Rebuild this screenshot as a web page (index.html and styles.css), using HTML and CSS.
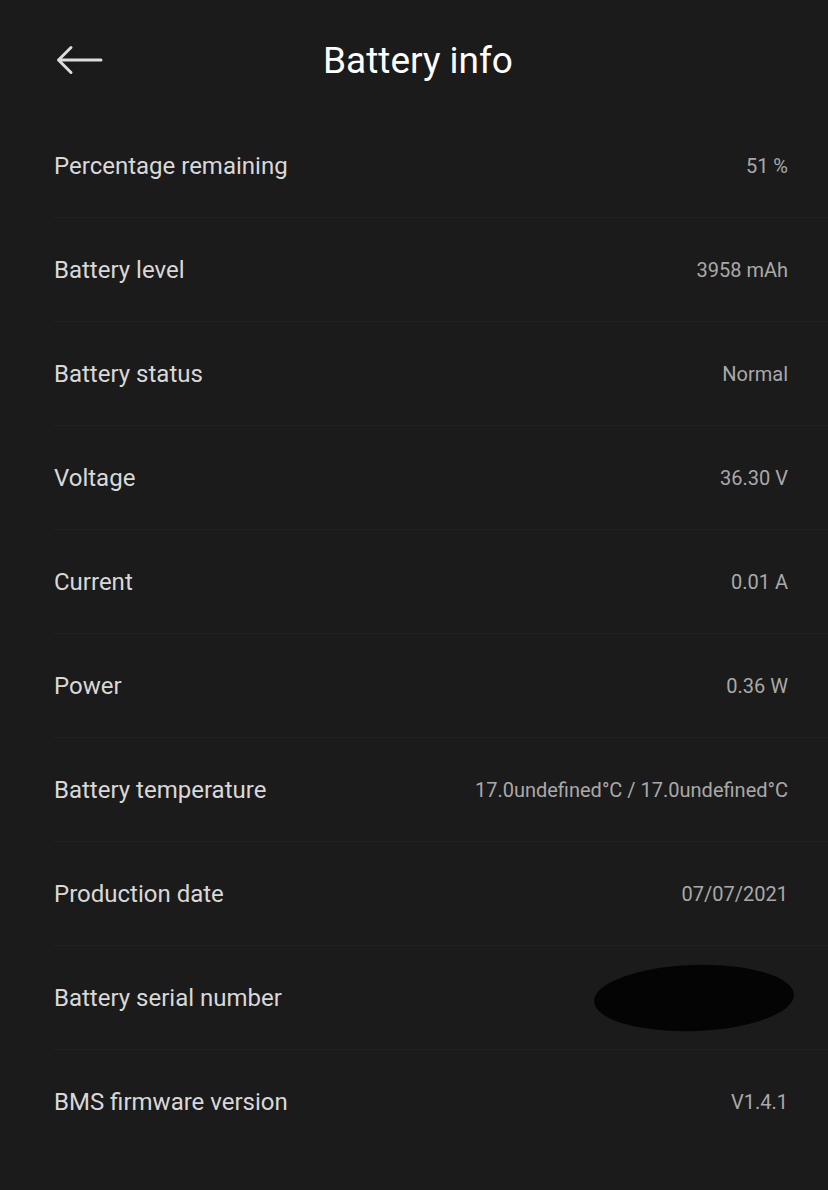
FILE: index.html
```html
<!DOCTYPE html>
<html>
<head>
<meta charset="utf-8">
<link rel="stylesheet" href="styles.css">
</head>
<body>
<div class="page">
  <header class="topbar">
    <button class="back" aria-label="Back">
      <svg width="48" height="32" viewBox="0 0 48 32"><path d="M2.5 16 H45 M15 3.5 L2.5 16 L15 28.5" fill="none" stroke="#dcdcdc" stroke-width="3" stroke-linecap="round" stroke-linejoin="round"/></svg>
    </button>
    <h1 class="title">Battery info</h1>
  </header>
  <ul class="list">
    <li class="row"><span class="label">Percentage remaining</span><span class="value">51 %</span></li>
    <li class="row"><span class="label">Battery level</span><span class="value">3958 mAh</span></li>
    <li class="row"><span class="label">Battery status</span><span class="value">Normal</span></li>
    <li class="row"><span class="label">Voltage</span><span class="value">36.30 V</span></li>
    <li class="row"><span class="label">Current</span><span class="value">0.01 A</span></li>
    <li class="row"><span class="label">Power</span><span class="value">0.36 W</span></li>
    <li class="row"><span class="label">Battery temperature</span><span class="value">17.0undefined°C / 17.0undefined°C</span></li>
    <li class="row"><span class="label">Production date</span><span class="value">07/07/2021</span></li>
    <li class="row"><span class="label">Battery serial number</span><span class="value"><span class="redact"></span></span></li>
    <li class="row last"><span class="label">BMS firmware version</span><span class="value">V1.4.1</span></li>
  </ul>
</div>
</body>
</html>
```
FILE: styles.css
```css
html, body {
  margin: 0;
  padding: 0;
  background: #1b1b1b;
}
body {
  font-family: Roboto, "Noto Sans", sans-serif;
  color: #d6d6d6;
}
.page {
  width: 828px;
  height: 1190px;
  overflow: hidden;
}
.topbar {
  position: relative;
  height: 114px;
  display: flex;
  align-items: center;
  justify-content: center;
  box-sizing: border-box;
}
.back {
  position: absolute;
  left: 56px;
  top: 44px;
  background: none;
  border: 0;
  padding: 0;
  width: 48px;
  height: 32px;
  display: block;
}
.back svg { display: block; }
.title {
  margin: 0 0 0 8px;
  font-size: 37px;
  font-weight: 400;
  color: #ffffff;
  line-height: 1;
  position: relative;
  top: 3px;
}
.list {
  list-style: none;
  margin: 0;
  padding: 0;
}
.row {
  height: 104px;
  margin-left: 52px;
  padding-right: 40px;
  display: flex;
  align-items: center;
  justify-content: space-between;
  border-bottom: 1px solid #202020;
  box-sizing: border-box;
}
.row.last { border-bottom: 0; }
.label {
  font-size: 24px;
  color: #d8d8d8;
  padding-left: 2px;
}
.value {
  font-size: 20px;
  color: #a9a9a9;
  display: flex;
  align-items: center;
}
.redact {
  display: block;
  width: 200px;
  height: 66px;
  background: #040404;
  border-radius: 50% / 50%;
  transform: rotate(-2deg);
  margin-right: -6px;
}
```
